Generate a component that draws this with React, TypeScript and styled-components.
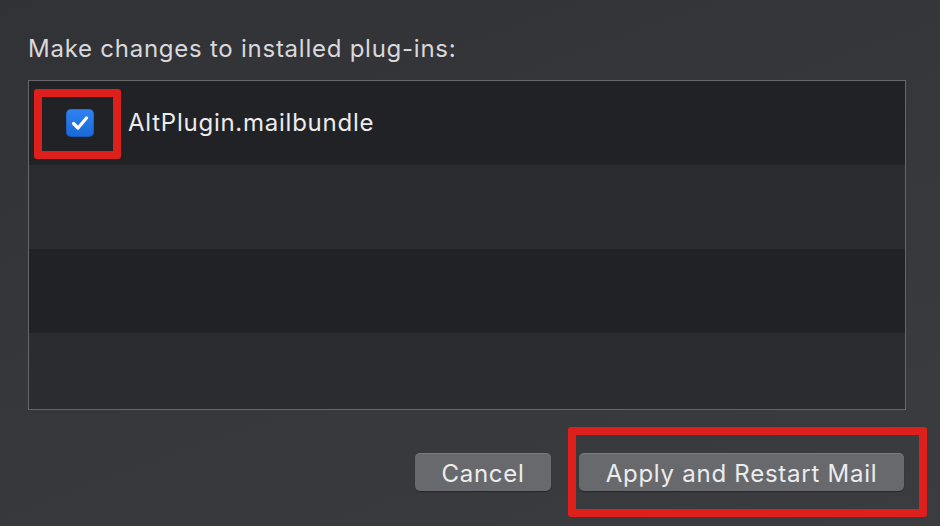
import React from "react";
import styled, { createGlobalStyle } from "styled-components";

const GlobalStyle = createGlobalStyle`
  html, body {
    margin: 0;
    padding: 0;
    background: #36373b;
  }
  body {
    font-family: Inter, "Liberation Sans", Arial, sans-serif;
    -webkit-font-smoothing: antialiased;
  }
`;

const plugins = ["AltPlugin.mailbundle", "", "", ""];

const Dialog = styled.div`
  width: 940px;
  height: 526px;
  box-sizing: border-box;
  padding: 34px 34px 0 28px;
  background: linear-gradient(160deg, #313236 0%, #37383c 55%, #3b3c40 100%);
  display: flex;
  flex-direction: column;
  overflow: hidden;
`;

const Heading = styled.div`
  font-size: 24px;
  letter-spacing: 0.75px;
  color: #d9d9db;
  line-height: 30px;
  margin-bottom: 16px;
`;

const List = styled.div`
  border: 1px solid #66676a;
  height: 330px;
  box-sizing: border-box;
  display: flex;
  flex-direction: column;
  overflow: hidden;
  background: #2b2c30;
`;

const Row = styled.div<{ $odd: boolean }>`
  flex: 0 0 84px;
  display: flex;
  align-items: center;
  gap: 34px;
  padding-left: 37px;
  background: ${({ $odd }) => ($odd ? "#2b2c30" : "#212226")};
`;

const Marked = styled.div`
  position: relative;
  display: flex;

  &::after {
    content: "";
    position: absolute;
    left: -32px;
    right: -27px;
    top: -20px;
    bottom: -22px;
    border: 8px solid #dd201c;
    border-radius: 3px;
  }
`;

const Box = styled.div`
  width: 28px;
  height: 28px;
  border-radius: 5px;
  background: linear-gradient(180deg, #2f83f2 0%, #1a68d8 100%);
  display: flex;
  align-items: center;
  justify-content: center;
  box-shadow: inset 0 0 0 1px rgba(0, 0, 0, 0.15);
`;

const Label = styled.span`
  font-size: 24px;
  letter-spacing: 0.75px;
  color: #ececee;
  margin-top: -2px;
`;

const Footer = styled.div`
  display: flex;
  justify-content: flex-end;
  gap: 28px;
  margin-top: 43px;
  padding-right: 2px;
`;

const Button = styled.button<{ $w: number }>`
  height: 38px;
  box-sizing: border-box;
  border: none;
  border-radius: 5px;
  background: #68696d;
  box-shadow: inset 0 1px 0 rgba(255, 255, 255, 0.12), 0 1px 1px rgba(0, 0, 0, 0.35);
  color: #ececee;
  font-family: Inter, "Liberation Sans", Arial, sans-serif;
  font-size: 24px;
  letter-spacing: 0.75px;
  padding: 2px 0 0;
  display: flex;
  align-items: center;
  justify-content: center;
  width: ${({ $w }) => $w}px;
`;

const Highlight = styled.div`
  position: relative;
  display: flex;

  &::after {
    content: "";
    position: absolute;
    left: -11px;
    right: -23px;
    top: -26px;
    bottom: -26px;
    border: 8px solid #dd201c;
    border-radius: 3px;
    pointer-events: none;
  }
`;

const Check = () => (
  <svg width="24" height="24" viewBox="0 0 24 24" fill="none">
    <path
      d="M5.5 12.5 L10 17 L18.5 7"
      stroke="#ffffff"
      strokeWidth="3.2"
      strokeLinecap="round"
      strokeLinejoin="round"
    />
  </svg>
);

export default function App() {
  return (
    <>
      <GlobalStyle />
      <Dialog>
        <Heading>Make changes to installed plug-ins:</Heading>
        <List>
          {plugins.map((name, i) => (
            <Row key={i} $odd={i % 2 === 1}>
              {name && (
                <>
                  <Marked>
                    <Box>
                      <Check />
                    </Box>
                  </Marked>
                  <Label>{name}</Label>
                </>
              )}
            </Row>
          ))}
        </List>
        <Footer>
          <Button $w={136}>Cancel</Button>
          <Highlight>
            <Button $w={325}>Apply and Restart Mail</Button>
          </Highlight>
        </Footer>
      </Dialog>
    </>
  );
}
